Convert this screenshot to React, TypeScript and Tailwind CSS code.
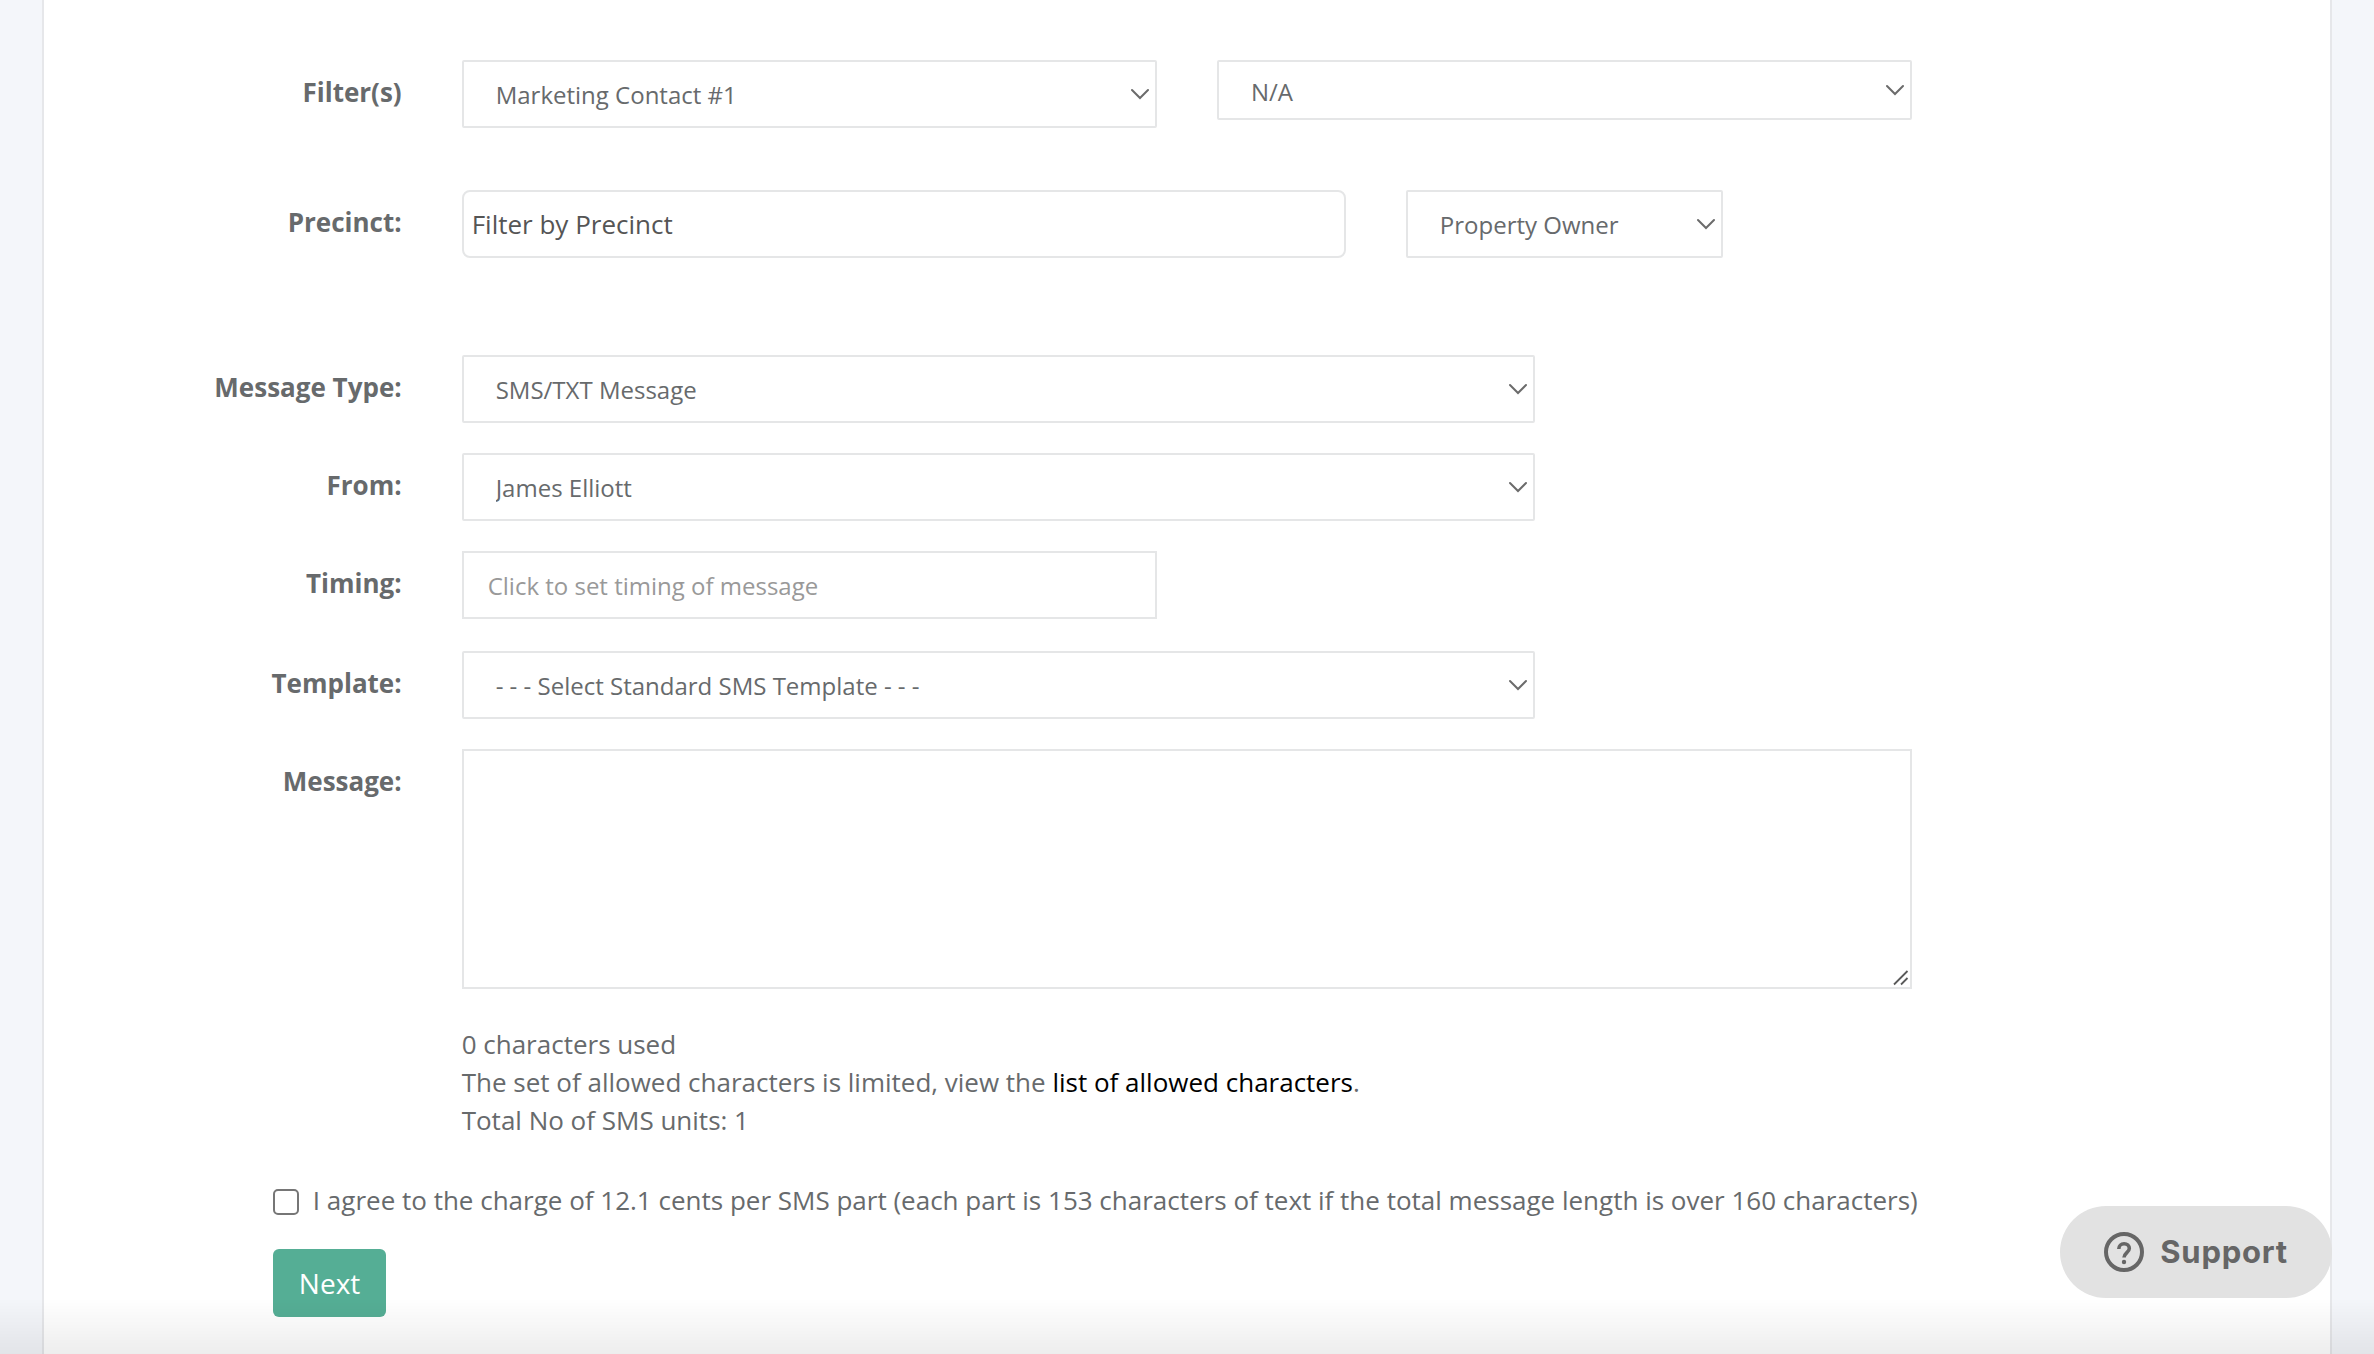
import type { ReactNode } from "react";
import clsx from "clsx";

const LABEL = "col-span-2 pt-[13px] text-right text-[26px] leading-[38px] font-bold";
const ROW = "grid grid-cols-12 gap-x-[60px] px-[30px]";
const BOX = "block w-full border-2 border-[#e5e6e7] bg-white";

export default function App() {
  return (
    <div className="min-h-screen bg-[#f4f6fa] px-[42px] font-['Open_Sans',sans-serif] text-[#676a6c]">
      <main className="min-h-screen border-x-2 border-[#e6e7ea] bg-white px-2.5 pt-[60px]">
        <form onSubmit={(e) => e.preventDefault()}>
          {/* Audience filters */}
          <div className={clsx(ROW, "mb-[62px]")}>
            <label htmlFor="filter" className={LABEL}>
              Filter(s)
            </label>
            <Select id="filter" option="Marketing Contact #1" className="col-span-4" />
            <Select id="filter-value" label="Filter value" option="N/A" className="col-span-4" short />
          </div>

          <div className={clsx(ROW, "mb-[97px]")}>
            <label htmlFor="precinct" className={LABEL}>
              Precinct:
            </label>
            <input
              id="precinct"
              type="text"
              placeholder="Filter by Precinct"
              className={clsx(
                BOX,
                "col-span-5 h-[68px] rounded-lg px-2 text-[26px] text-[#555] placeholder:text-[#555]",
              )}
            />
            <Select id="contact-role" label="Contact role" option="Property Owner" className="col-span-2" />
          </div>

          {/* Message settings */}
          <Row label="Message Type:" htmlFor="message-type" className="mb-[30px]">
            <Select id="message-type" option="SMS/TXT Message" className="col-span-6" />
          </Row>
          <Row label="From:" htmlFor="from" className="mb-[30px]">
            <Select id="from" option="James Elliott" className="col-span-6" />
          </Row>
          <Row label="Timing:" htmlFor="timing" className="mb-8">
            <input
              id="timing"
              type="text"
              placeholder="Click to set timing of message"
              className={clsx(BOX, "col-span-4 h-[68px] px-6 text-2xl placeholder:text-[#999]")}
            />
          </Row>
          <Row label="Template:" htmlFor="template" className="mb-[30px]">
            <Select
              id="template"
              option="- - - Select Standard SMS Template - - -"
              className="col-span-6"
            />
          </Row>

          <div className={ROW}>
            <label htmlFor="message" className={LABEL}>
              Message:
            </label>
            <div className="relative col-span-8">
              <textarea id="message" className={clsx(BOX, "h-[240px] resize-none px-6 py-3 text-2xl")} />
              <svg
                className="pointer-events-none absolute right-[3px] bottom-[3px] h-4 w-4"
                viewBox="0 0 16 16"
                fill="none"
                stroke="#5a5a5a"
                strokeWidth="1.8"
              >
                <path d="M1 14.5 14.5 1M8 14.5 14.5 8" />
              </svg>
            </div>
            <div className="col-span-8 col-start-3 mt-9 text-[26px] leading-[38px]">
              <p>0 characters used</p>
              <p>
                The set of allowed characters is limited, view the{" "}
                <a href="#allowed" className="text-black">
                  list of allowed characters
                </a>
                .
              </p>
              <p>Total No of SMS units: 1</p>
            </div>
          </div>

          {/* Consent and submit */}
          <div className={clsx(ROW, "mt-[42px]")}>
            <div className="col-span-11 col-start-2">
              <label className="flex items-start gap-[14px] text-[26px] leading-[38px]">
                <input
                  type="checkbox"
                  className="mt-2 size-[26px] shrink-0 appearance-none rounded-[5px] border-2 border-[#767676] bg-white checked:bg-[#55ae95]"
                />
                I agree to the charge of 12.1 cents per SMS part (each part is 153 characters of text if
                the total message length is over 160 characters)
              </label>
              <button
                type="submit"
                className="mt-[30px] h-[68px] rounded-md bg-[#55ae95] px-[26px] text-[28px] text-white"
              >
                Next
              </button>
            </div>
          </div>
        </form>
      </main>

      <button
        type="button"
        className="fixed right-[42px] bottom-14 flex h-[92px] items-center gap-4 rounded-full bg-[#e2e2e2] px-11 font-['Inter',sans-serif] text-[31px] font-bold tracking-wide text-[#666]"
      >
        <HelpIcon />
        Support
      </button>

      <div className="pointer-events-none fixed inset-x-0 bottom-0 h-14 bg-linear-to-t from-black/7 to-transparent" />
    </div>
  );
}

type RowProps = {
  label: string;
  htmlFor: string;
  className?: string;
  children: ReactNode;
};

function Row({ label, htmlFor, className, children }: RowProps) {
  return (
    <div className={clsx(ROW, className)}>
      <label htmlFor={htmlFor} className={LABEL}>
        {label}
      </label>
      {children}
    </div>
  );
}

type SelectProps = {
  id: string;
  option: string;
  label?: string;
  className?: string;
  short?: boolean;
};

function Select({ id, option, label, className, short }: SelectProps) {
  return (
    <div className={clsx("relative self-start", className)}>
      <select
        id={id}
        aria-label={label}
        className={clsx(
          BOX,
          "appearance-none rounded-xs pr-10 pl-8 text-2xl",
          short ? "h-[60px] pt-1" : "h-[68px] pt-0.5",
        )}
      >
        <option>{option}</option>
      </select>
      <svg
        className="pointer-events-none absolute top-1/2 right-2 h-3 w-[18px] -translate-y-1/2"
        viewBox="0 0 18 12"
        fill="none"
        stroke="#6b6b6b"
        strokeWidth="2"
        strokeLinecap="round"
      >
        <path d="M1 2 9 10 17 2" />
      </svg>
    </div>
  );
}

function HelpIcon() {
  return (
    <svg className="size-10" viewBox="0 0 40 40" fill="none" stroke="currentColor">
      <circle cx="20" cy="20" r="18" strokeWidth="4" />
      <path d="M14.8 17c0-3 2.2-5.2 5.3-5.2s5.2 2 5.2 4.8c0 3.9-5.3 4.4-5.3 9" strokeWidth="3.6" />
      <circle cx="20" cy="30" r="2.2" fill="currentColor" stroke="none" />
    </svg>
  );
}
